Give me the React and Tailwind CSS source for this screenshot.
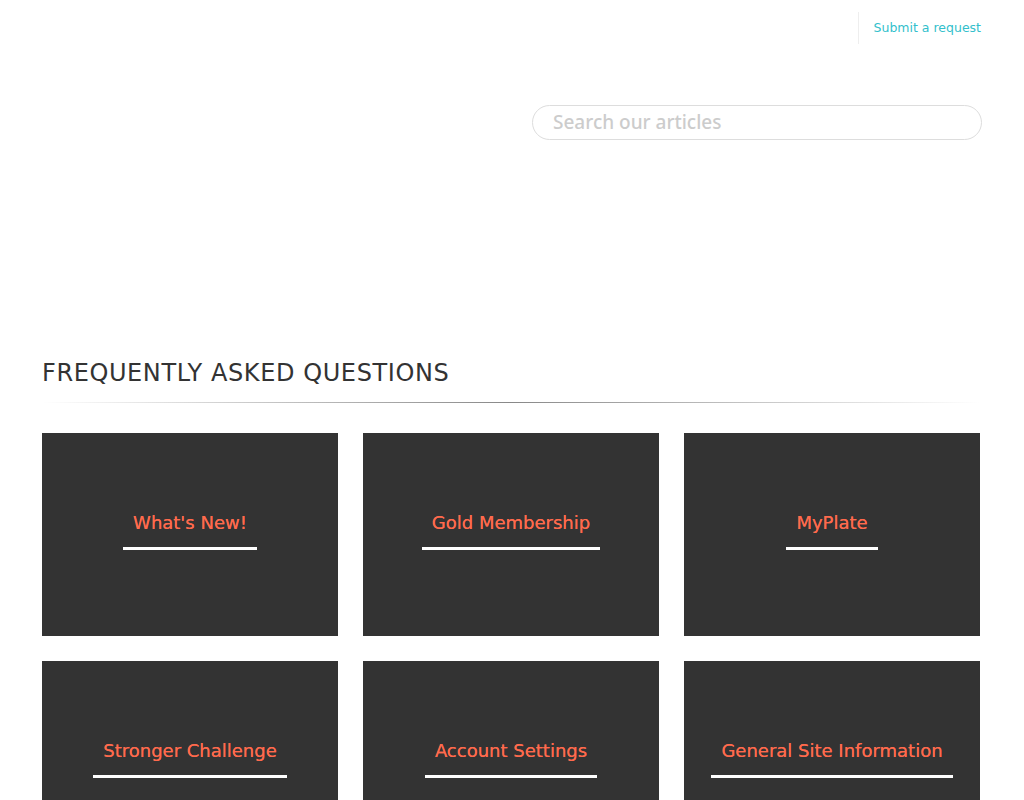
export default function App() {
  const cats = [
    "What's New!",
    "Gold Membership",
    "MyPlate",
    "Stronger Challenge",
    "Account Settings",
    "General Site Information",
  ];
  return (
    <div className="min-h-screen bg-white" style={{ fontFamily: '"DejaVu Sans", sans-serif' }}>
      <div className="mx-[42px]">
        <header className="flex justify-end pt-[12px]">
          <div className="flex h-[32px] items-center border-l border-[#eeeeee] pl-[15px] pr-[1px]">
            <a className="text-[12.5px] text-[#33bfcc]" href="#">Submit a request</a>
          </div>
        </header>
        <div className="flex justify-end pt-[61px]">
          <div className="flex h-[35px] w-[450px] items-center rounded-full border border-[#dddddd] px-[20px]">
            <input
              className="w-full bg-transparent text-[19px] font-medium text-[#999] outline-none placeholder:text-[#cccccc]"
              style={{ fontFamily: '"Noto Sans", sans-serif' }}
              placeholder="Search our articles"
            />
          </div>
        </div>
        <h2 className="mt-[217px] text-[24px] leading-[32px] tracking-[0.6px] text-[#333333]">
          FREQUENTLY ASKED QUESTIONS
        </h2>
        <div className="mt-[13px] h-px w-[938px] bg-gradient-to-r from-transparent via-[#888888] to-transparent" />
        <div className="mt-[30px] grid w-[938px] grid-cols-3 gap-[25px]">
          {cats.map((c) => (
            <div key={c} className="flex h-[203px] justify-center bg-[#333333] pt-[78px]">
              <div>
                <span className="inline-block border-b-[3px] border-white px-[10px] pb-[12px] text-[18px] leading-[24px] text-[#ff6a4d] [text-shadow:0_0_0.4px_#ff6a4d]">
                  {c}
                </span>
              </div>
            </div>
          ))}
        </div>
      </div>
    </div>
  );
}
